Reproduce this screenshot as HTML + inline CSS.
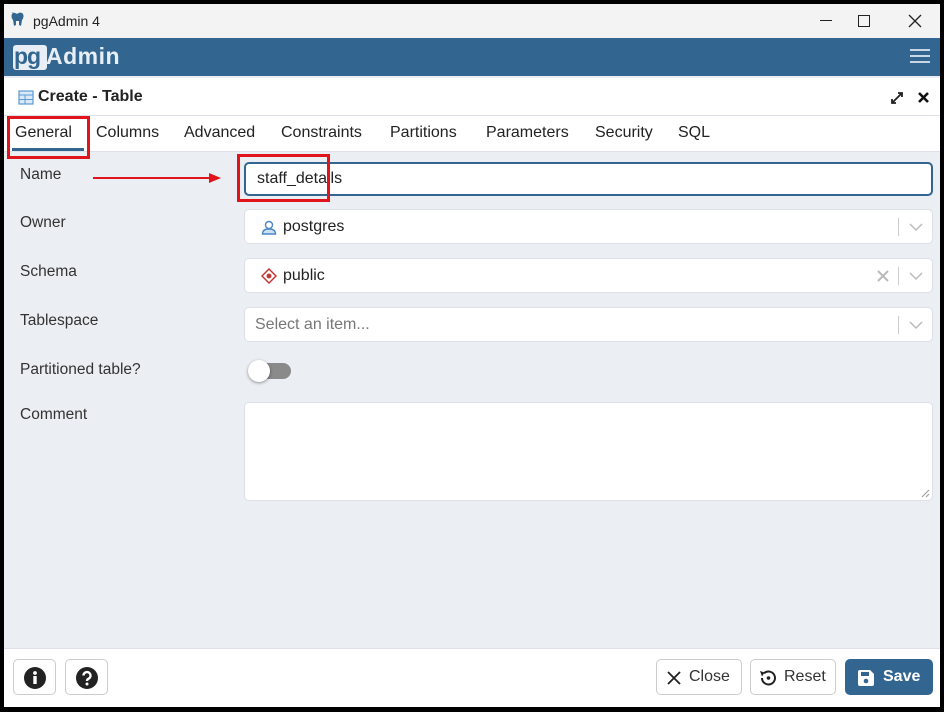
<!DOCTYPE html>
<html><head><meta charset="utf-8"><style>
*{box-sizing:border-box;margin:0;padding:0}
body{width:944px;height:712px;background:#000;position:relative;overflow:hidden;font-family:"Liberation Sans",Arial,sans-serif;color:#222}
.a{position:absolute}
.win{left:4px;top:4px;width:936px;height:703px;background:#ebeef3}
.tb{left:4px;top:4px;width:936px;height:34px;background:#f3f3f3}
.hd{left:4px;top:38px;width:936px;height:38px;background:#326690}
.pt{left:4px;top:78px;width:936px;height:38px;background:#fff;border-bottom:1px solid #dde0e6}
.tabs{left:4px;top:116px;width:936px;height:36px;background:#fff;border-bottom:1px solid #dde0e6}
.tab{position:absolute;top:124px;font-size:16px;color:#222}
.lbl{position:absolute;left:20px;font-size:15.5px;color:#333}
.fld{position:absolute;left:244px;width:689px;background:#fff;border:1px solid #dde0e6;border-radius:5px;font-size:16px;color:#222}
.chev{position:absolute;right:0;top:8px;width:34px;height:18px;border-left:1px solid #ccc}
.ft{left:4px;top:648px;width:936px;height:59px;background:#fff;border-top:1px solid #dde0e6}
.btn{position:absolute;top:659px;height:36px;border:1px solid #ccc;border-radius:5px;background:#fff;font-size:16px;color:#333}
.red{position:absolute;border:3px solid #e0141b}
</style></head><body>
<div class="a win"></div>
<div class="a tb"></div>
<svg class="a" style="left:10px;top:11px" width="16" height="18" viewBox="0 0 16 18"><path d="M3 2c-2 1-2 5 0 7l1 6 2-1 0-4 3 0 0 4 2 1 1-6c2-2 2-6 0-7-2-1-4 0-5 1-1-1-4-2-6-1z" fill="#336791"/></svg>
<div class="a" style="left:33px;top:13px;font-size:14px;color:#222">pgAdmin 4</div>
<div class="a" style="left:820px;top:20px;width:12px;height:1px;background:#222"></div>
<div class="a" style="left:858px;top:15px;width:12px;height:12px;border:1.3px solid #222"></div>
<svg class="a" style="left:908px;top:14px" width="14" height="14"><path d="M1 1L13 13M13 1L1 13" stroke="#222" stroke-width="1.3"/></svg>
<div class="a hd"></div>
<div class="a" style="left:13px;top:45px;width:34px;height:25px;background:#e8eef5;border-radius:3px"></div>
<div class="a" style="left:14px;top:43px;font-size:23px;font-weight:bold;color:#326690;letter-spacing:-1px">pg</div>
<div class="a" style="left:46px;top:43px;font-size:23px;font-weight:bold;color:#e8eef5;letter-spacing:0.5px">Admin</div>
<div class="a" style="left:910px;top:49px;width:20px;height:2px;background:#c8d6e6;box-shadow:0 6px 0 #c8d6e6,0 12px 0 #c8d6e6"></div>
<div class="a pt"></div>
<svg class="a" style="left:18px;top:90px" width="16" height="15"><rect x="1" y="1" width="14" height="13" fill="#dbe9f7" stroke="#5a9bd5" stroke-width="1.2"/><path d="M1 5H15M1 9.5H15M7 5V14" stroke="#5a9bd5"/></svg>
<div class="a" style="left:38px;top:88px;font-size:16px;font-weight:bold;color:#222">Create - Table</div>
<svg class="a" style="left:889px;top:90px" width="16" height="16"><path d="M3 13L13 3M9 3H13V7M3 9V13H7" stroke="#222" stroke-width="1.8" fill="none"/></svg>
<svg class="a" style="left:917px;top:91px" width="13" height="13"><path d="M2 2L11 11M11 2L2 11" stroke="#111" stroke-width="2.6"/></svg>
<div class="a tabs"></div>
<div class="tab" style="left:15px">General</div>
<div class="a" style="left:12px;top:148px;width:72px;height:3px;background:#326690"></div>
<div class="tab" style="left:96px">Columns</div>
<div class="tab" style="left:184px">Advanced</div>
<div class="tab" style="left:281px">Constraints</div>
<div class="tab" style="left:390px">Partitions</div>
<div class="tab" style="left:486px">Parameters</div>
<div class="tab" style="left:595px">Security</div>
<div class="tab" style="left:678px">SQL</div>
<div class="red" style="left:7px;top:116px;width:83px;height:43px"></div>

<div class="lbl" style="top:166px">Name</div>
<div class="fld" style="top:162px;height:34px;border:2px solid #326690"><span class="a" style="left:11px;top:6px">staff_details</span></div>
<svg class="a" style="left:93px;top:172px" width="130" height="12"><path d="M0 6H118" stroke="#e0141b" stroke-width="2"/><path d="M116 1L128 6L116 11Z" fill="#e0141b"/></svg>
<div class="red" style="left:237px;top:154px;width:93px;height:48px"></div>

<div class="lbl" style="top:214px">Owner</div>
<div class="fld" style="top:209px;height:35px"><svg class="a" style="left:16px;top:10px" width="16" height="15"><circle cx="8" cy="5" r="3.5" fill="none" stroke="#4a86c8" stroke-width="1.4"/><path d="M1.5 14c0-4 3-5 6.5-5s6.5 1 6.5 5z" fill="#cfe0f3" stroke="#4a86c8" stroke-width="1.4"/></svg><span class="a" style="left:38px;top:8px">postgres</span><div class="chev"><svg class="a" style="left:10px;top:5px" width="14" height="9"><path d="M1 1L7 7L13 1" stroke="#bbb" stroke-width="1.5" fill="none"/></svg></div></div>

<div class="lbl" style="top:263px">Schema</div>
<div class="fld" style="top:258px;height:35px"><svg class="a" style="left:16px;top:9px" width="16" height="16"><path d="M8 1L15 8L8 15L1 8Z" fill="#fff" stroke="#c03838" stroke-width="1.5"/><circle cx="8" cy="8" r="2.5" fill="#c03838"/></svg><span class="a" style="left:38px;top:8px">public</span><svg class="a" style="left:632px;top:11px" width="12" height="12"><path d="M1 1L11 11M11 1L1 11" stroke="#bbb" stroke-width="2"/></svg><div class="chev"><svg class="a" style="left:10px;top:5px" width="14" height="9"><path d="M1 1L7 7L13 1" stroke="#bbb" stroke-width="1.5" fill="none"/></svg></div></div>

<div class="lbl" style="top:312px">Tablespace</div>
<div class="fld" style="top:307px;height:35px"><span class="a" style="left:10px;top:8px;color:#777">Select an item...</span><div class="chev"><svg class="a" style="left:10px;top:5px" width="14" height="9"><path d="M1 1L7 7L13 1" stroke="#bbb" stroke-width="1.5" fill="none"/></svg></div></div>

<div class="lbl" style="top:361px">Partitioned table?</div>
<div class="a" style="left:251px;top:363px;width:40px;height:16px;border-radius:8px;background:#8a8a8a"></div>
<div class="a" style="left:248px;top:360px;width:22px;height:22px;border-radius:50%;background:#fff;box-shadow:0 1px 3px rgba(0,0,0,.4)"></div>

<div class="lbl" style="top:406px">Comment</div>
<div class="fld" style="top:402px;height:99px"><svg class="a" style="right:2px;bottom:2px" width="9" height="9"><path d="M8 1L1 8M8 5L5 8" stroke="#999"/></svg></div>

<div class="a ft"></div>
<div class="btn" style="left:13px;width:43px"><svg class="a" style="left:9px;top:6px" width="24" height="24"><circle cx="12" cy="12" r="11" fill="#222"/><rect x="10.3" y="10" width="3.4" height="8" fill="#fff"/><circle cx="12" cy="7" r="1.9" fill="#fff"/></svg></div>
<div class="btn" style="left:65px;width:43px"><svg class="a" style="left:9px;top:6px" width="24" height="24"><circle cx="12" cy="12" r="11" fill="#222"/><path d="M8.5 9.5a3.5 3.5 0 1 1 5 3.2c-1 .5-1.5 1-1.5 2.3" stroke="#fff" stroke-width="2.4" fill="none"/><circle cx="12" cy="18" r="1.5" fill="#fff"/></svg></div>
<div class="btn" style="left:656px;width:86px"><svg class="a" style="left:10px;top:11px" width="14" height="14"><path d="M1 1L13 13M13 1L1 13" stroke="#222" stroke-width="1.8"/></svg><span class="a" style="left:32px;top:8px">Close</span></div>
<div class="btn" style="left:750px;width:86px"><svg class="a" style="left:7px;top:8px" width="20" height="20"><path d="M4 10a6.5 6.5 0 1 0 2-4.7" stroke="#222" stroke-width="2" fill="none"/><path d="M2 3L6.5 4.5L4 8.5Z" fill="#222"/><circle cx="10.5" cy="10" r="1.8" fill="#222"/></svg><span class="a" style="left:33px;top:8px">Reset</span></div>
<div class="btn" style="left:845px;width:88px;background:#326690;border-color:#326690;color:#fff;font-weight:bold"><svg class="a" style="left:11px;top:9px" width="18" height="18"><path d="M1 3a2 2 0 0 1 2-2h10l4 4v10a2 2 0 0 1-2 2H3a2 2 0 0 1-2-2z" fill="#fff"/><rect x="4" y="3" width="8" height="4" fill="#326690"/><circle cx="9" cy="12" r="2.3" fill="#326690"/></svg><span class="a" style="left:37px;top:8px">Save</span></div>
</body></html>
